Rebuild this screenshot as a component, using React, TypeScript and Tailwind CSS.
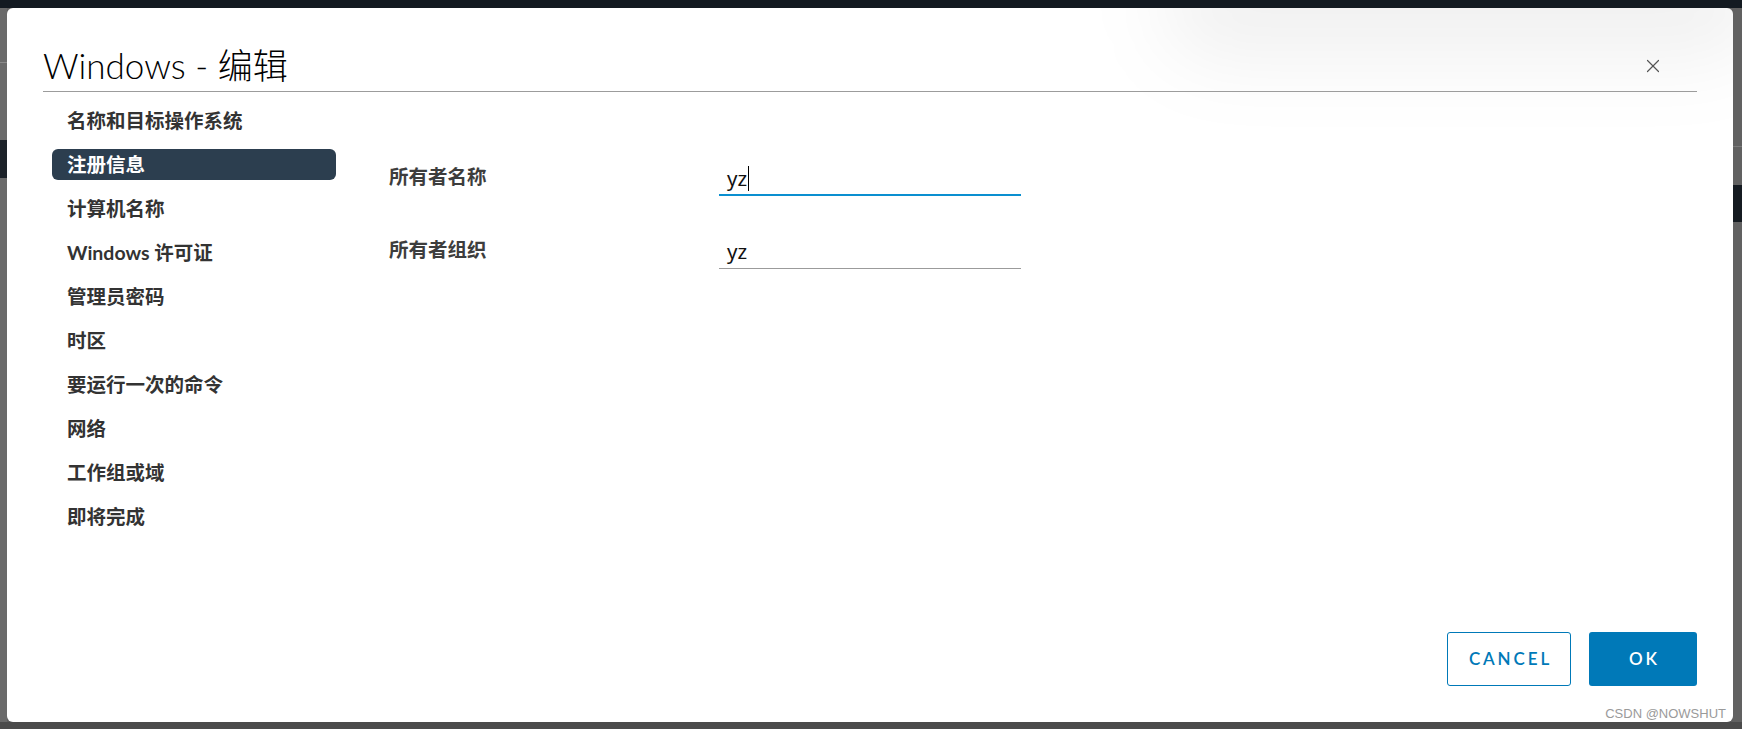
import { X } from "lucide-react";

const navItems = [
  "名称和目标操作系统",
  "注册信息",
  "计算机名称",
  "Windows 许可证",
  "管理员密码",
  "时区",
  "要运行一次的命令",
  "网络",
  "工作组或域",
  "即将完成",
];

const fontStack = "font-['Lato','Noto_Sans_CJK_SC',sans-serif]";

function Field({
  label,
  value,
  focused,
}: {
  label: string;
  value: string;
  focused?: boolean;
}) {
  return (
    <div className="flex items-center h-[34px]">
      <div className="w-[330px] -mt-[5px] text-[19.5px] font-bold text-[#3d3d3d] leading-none">
        {label}
      </div>
      <div
        className={`w-[302px] h-[34px] flex items-center pl-2 font-['Noto_Sans','Noto_Sans_CJK_SC',sans-serif] text-[20.5px] text-[#111] ${
          focused
            ? "border-b-2 border-[#0a8fd0]"
            : "border-b border-[#9b9b9b]"
        }`}
      >
        <span>{value}</span>
        {focused && <span className="ml-[1px] w-px h-[25px] bg-black" />}
      </div>
    </div>
  );
}

export default function App() {
  return (
    <div
      className={`w-[1742px] h-[729px] flex flex-col bg-[#5f5f5f] overflow-hidden ${fontStack}`}
    >
      <div className="h-2 bg-[#131a21] shrink-0" />
      <div className="flex flex-1 min-h-0">
        {/* background page peeking out on the left */}
        <div className="w-[7px] bg-[#6a6a6a] flex flex-col">
          <div className="h-[54px]" />
          <div className="h-px bg-[#8a8a8a]" />
          <div className="h-[77px]" />
          <div className="h-[38px] bg-[#1c2229]" />
        </div>

        <div className="relative flex-1 flex flex-col bg-white rounded-md overflow-hidden">
          <div className="absolute -top-[60px] -right-[30px] w-[600px] h-[110px] rounded-full bg-black/[0.06] blur-2xl" />

          <div className="relative mx-9 flex items-center justify-between pt-[37px] pb-[6px] border-b border-[#9c9c9c]">
            <h1 className="text-[35px] leading-[40px] font-light text-black">
              Windows - 编辑
            </h1>
            <X className="w-[22px] h-[22px] mr-[33px] mt-[2px] text-[#555]" strokeWidth={1.3} />
          </div>

          <div className="flex flex-1 pl-[45px] pt-[13px]">
            <nav className="w-[284px] flex flex-col gap-[13px]">
              {navItems.map((item, i) => (
                <div
                  key={item}
                  className={`h-[31px] flex items-center pl-[15px] rounded-[6px] text-[19.5px] font-bold ${
                    i === 1 ? "bg-[#2c3e4f] text-white" : "text-[#333]"
                  }`}
                >
                  {item}
                </div>
              ))}
            </nav>

            <div className="ml-[53px] mt-[57px] flex flex-col gap-[39px]">
              <Field label="所有者名称" value="yz" focused />
              <Field label="所有者组织" value="yz" />
            </div>
          </div>

          <div className="flex justify-end gap-[18px] px-9 pb-9">
            <button className="w-[124px] h-[54px] rounded-[3px] border border-[#0079b8] text-[#0079b8] text-[17px] font-semibold tracking-[0.17em] pl-[3px]">
              CANCEL
            </button>
            <button className="w-[108px] h-[54px] rounded-[3px] bg-[#0079b8] text-white text-[17px] font-semibold tracking-[0.17em] pl-[3px]">
              OK
            </button>
          </div>

          <div className="absolute right-[7px] bottom-0 text-[13px] leading-[16px] text-[#9a9a9a] font-['Liberation_Sans',sans-serif]">
            CSDN @NOWSHUT
          </div>
        </div>

        {/* background page peeking out on the right */}
        <div className="w-[9px] bg-[#616161] flex flex-col">
          <div className="h-[138px]" />
          <div className="h-px bg-[#7a7a7a]" />
          <div className="h-[38px]" />
          <div className="h-[37px] bg-[#151b21]" />
        </div>
      </div>
      <div className="h-[7px] bg-[#4b4b4b] shrink-0" />
    </div>
  );
}
